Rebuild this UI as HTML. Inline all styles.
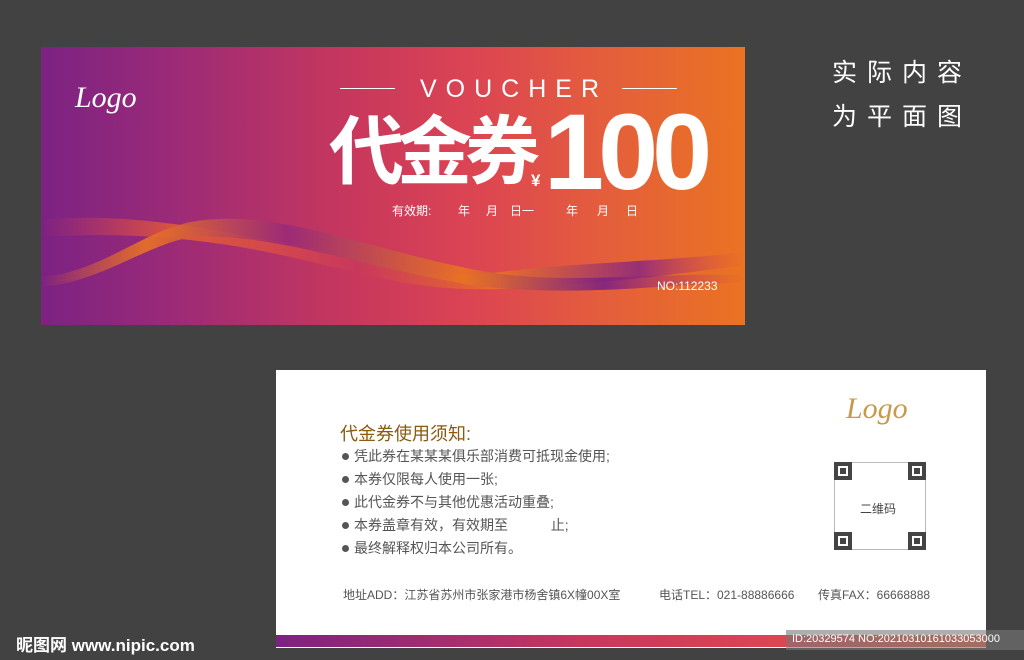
<!DOCTYPE html>
<html><head><meta charset="utf-8">
<style>
*{margin:0;padding:0;box-sizing:border-box}
body{width:1024px;height:660px;background:#424242;position:relative;overflow:hidden;font-family:"Liberation Sans","Noto Sans CJK SC",sans-serif}
.abs{position:absolute}
.front{left:41px;top:47px;width:704px;height:278px;background:linear-gradient(90deg,#7c2283 0%,#9a2a78 18%,#c9385c 45%,#dc4552 62%,#e45e3c 80%,#ea7322 100%);overflow:hidden}
.side{color:#fff;font-size:25px;letter-spacing:10px;font-family:"Noto Sans CJK SC",sans-serif;line-height:44px}
.back{left:276px;top:370px;width:710px;height:278px;background:#fff}
.li{position:absolute;left:78px;font-size:14px;color:#555}
.li:before{content:"";position:absolute;left:-12px;top:7px;width:7px;height:7px;border-radius:50%;background:#555}
.qc{position:absolute;width:18px;height:18px;border:4px solid #444;background:#fff}
.qc:after{content:"";position:absolute;left:2px;top:2px;width:6px;height:6px;background:#444}
.d{position:absolute;top:155px;font-size:12px;color:#fff;white-space:nowrap}
.ft{position:absolute;top:216px;font-size:12px;color:#555;white-space:nowrap}
</style></head><body>
<div class="abs front">
  <svg class="abs" style="left:0;top:0" width="704" height="278" viewBox="0 0 704 278">
    <defs>
      <linearGradient id="g1" x1="0" x2="1"><stop offset="0" stop-color="#ea7322" stop-opacity="0"/><stop offset="0.15" stop-color="#ea7322"/><stop offset="0.35" stop-color="#9a2a78"/><stop offset="0.6" stop-color="#ea7322"/><stop offset="0.8" stop-color="#7c2283"/><stop offset="1" stop-color="#c9385c" stop-opacity="0"/></linearGradient>
      <linearGradient id="g2" x1="0" x2="1"><stop offset="0" stop-color="#d83e55" stop-opacity="0"/><stop offset="0.2" stop-color="#e8602f"/><stop offset="0.45" stop-color="#c9385c"/><stop offset="0.65" stop-color="#ea7322"/><stop offset="0.85" stop-color="#8a2680"/><stop offset="1" stop-color="#d84550" stop-opacity="0"/></linearGradient>
    </defs>
    <path d="M0 173 C80 165 160 180 240 195 C330 213 380 235 460 225 C540 215 620 215 704 205 L704 218 C620 230 540 238 460 242 C370 245 320 225 240 208 C160 190 80 185 0 190Z" fill="url(#g2)" opacity="0.85"/>
    <path d="M0 230 C60 225 100 185 150 175 C230 160 320 200 430 222 C520 240 600 225 704 228 L704 235 C600 240 520 250 430 238 C320 220 230 185 150 190 C100 200 60 235 0 240Z" fill="url(#g1)" opacity="0.9"/>
  </svg>
  <div class="abs" style="left:34px;top:34px;font-family:'Liberation Serif',serif;font-style:italic;font-size:30px;color:#fff">Logo</div>
  <div class="abs" style="left:299px;top:41px;width:55px;height:1px;background:#fff"></div>
  <div class="abs" style="left:581px;top:41px;width:55px;height:1px;background:#fff"></div>
  <div class="abs" style="left:379px;top:28px;font-size:25px;color:#fff;letter-spacing:9px">VOUCHER</div>
  <div class="abs" style="left:288px;top:61px;font-size:75px;line-height:75px;font-weight:bold;color:#fff;font-family:'Noto Sans CJK SC',sans-serif;letter-spacing:-7px;white-space:nowrap">代金券</div>
  <div class="abs" style="left:490px;top:124px;font-size:17px;color:#fff;font-weight:bold">¥</div>
  <div class="abs" style="left:503px;top:51px;font-size:108px;line-height:108px;font-weight:bold;color:#fff;letter-spacing:-6px">100</div>
  <div class="d" style="left:351px">有效期:</div>
  <div class="d" style="left:417px">年</div>
  <div class="d" style="left:445px">月</div>
  <div class="d" style="left:469px">日一</div>
  <div class="d" style="left:525px">年</div>
  <div class="d" style="left:556px">月</div>
  <div class="d" style="left:585px">日</div>
  <div class="abs" style="left:616px;top:232px;font-size:12px;color:#fff">NO:112233</div>
</div>
<div class="abs side" style="left:832px;top:49px">实际内容<br>为平面图</div>
<div class="abs back">
  <div class="abs" style="left:570px;top:22px;font-family:'Liberation Serif',serif;font-style:italic;font-size:30px;color:#c69a4a">Logo</div>
  <div class="abs" style="left:64px;top:50px;font-size:18px;color:#8a5a10">代金券使用须知:</div>
  <div class="li" style="top:76px">凭此券在某某某俱乐部消费可抵现金使用;</div>
  <div class="li" style="top:99px">本券仅限每人使用一张;</div>
  <div class="li" style="top:122px">此代金券不与其他优惠活动重叠;</div>
  <div class="li" style="top:145px">本券盖章有效，有效期至&nbsp;&nbsp;&nbsp;&nbsp;&nbsp;&nbsp;&nbsp;&nbsp;&nbsp;&nbsp;&nbsp;止;</div>
  <div class="li" style="top:168px">最终解释权归本公司所有。</div>
  <div class="abs" style="left:558px;top:92px;width:92px;height:88px;border:1px solid #bbb"></div>
  <div class="qc" style="left:558px;top:92px"></div>
  <div class="qc" style="left:632px;top:92px"></div>
  <div class="qc" style="left:558px;top:162px"></div>
  <div class="qc" style="left:632px;top:162px"></div>
  <div class="abs" style="left:584px;top:130px;font-size:12px;color:#444">二维码</div>
  <div class="ft" style="left:67px">地址ADD：江苏省苏州市张家港市杨舍镇6X幢00X室</div>
  <div class="ft" style="left:383px">电话TEL：021-88886666</div>
  <div class="ft" style="left:542px">传真FAX：66668888</div>
  <div class="abs" style="left:0;top:265px;width:710px;height:12px;background:linear-gradient(90deg,#7c2283,#c9385c 45%,#dc4552 70%,#e45e3c)"></div>
</div>
<div class="abs" style="left:786px;top:630px;width:238px;height:20px;background:rgba(120,120,120,0.6)"></div>
<div class="abs" style="left:792px;top:633px;font-size:11px;color:#fff;white-space:nowrap">ID:20329574 NO:20210310161033053000</div>
<div class="abs" style="left:16px;top:631px;font-size:17px;color:#fff;font-weight:bold;white-space:nowrap">昵图网 www.nipic.com</div>
</body></html>
